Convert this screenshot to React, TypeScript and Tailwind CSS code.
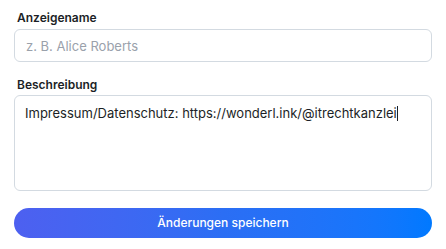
import React from 'react';

const App: React.FC = () => {
  return (
    <div className="w-[446px] h-[249px] bg-white px-[14px] pt-[10px] font-['Inter',sans-serif]">
      <label className="block pl-[3px] text-[12px] leading-4 font-semibold text-[#1c1f26]">Anzeigename</label>
      <input
        placeholder="z. B. Alice Roberts"
        className="mt-[3px] block w-full h-[33px] rounded-md border border-[#d3dae1] px-[11px] text-[13px] text-[#1c1f26] placeholder:text-[#9aa1ab] outline-none"
      />

      <label className="block pl-[3px] mt-[15px] text-[12px] leading-4 font-semibold text-[#1c1f26]">Beschreibung</label>
      <div className="mt-[2px] h-[96px] w-full rounded-md border border-[#d3dae1] px-[10px] pt-[8px] text-[13px] leading-[18px] text-[#1c1f26]">
        Impressum/Datenschutz: https://wonderl.ink/@itrechtkanzlei
        <span className="inline-block w-px h-[15px] bg-[#1c1f26] align-[-3px]" />
      </div>

      <button className="mt-[17px] w-full h-[30px] rounded-full bg-gradient-to-r from-[#4d60f0] via-[#2b6ef4] to-[#0079ff] text-[12px] font-medium text-white">
        Änderungen speichern
      </button>
    </div>
  );
};

export default App;
